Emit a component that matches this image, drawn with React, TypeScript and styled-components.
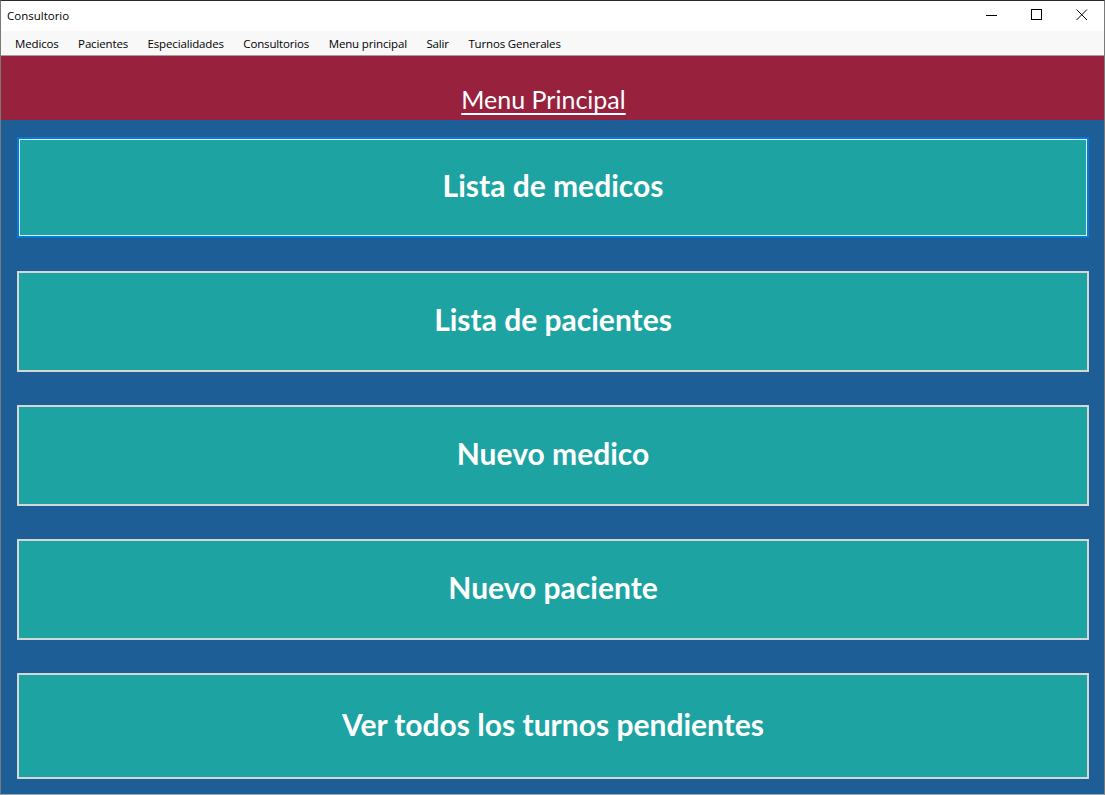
import React from 'react';
import styled, { createGlobalStyle } from 'styled-components';

const GlobalStyle = createGlobalStyle`
  html, body {
    margin: 0;
    padding: 0;
    background: #ffffff;
  }
  body {
    font-family: 'Open Sans', 'Noto Sans', sans-serif;
  }
`;

const Window = styled.div`
  width: 1105px;
  height: 795px;
  box-sizing: border-box;
  display: flex;
  flex-direction: column;
  border-top: 1px solid #2b2b2b;
  border-left: 1px solid #7a7a7a;
  border-right: 1px solid #7a7a7a;
  border-bottom: 1px solid #9aa9b8;
  overflow: hidden;
`;

const TitleBar = styled.div`
  height: 30px;
  flex: none;
  box-sizing: border-box;
  display: flex;
  align-items: center;
  justify-content: space-between;
  background: #ffffff;
  padding: 0 0 2px 6px;
`;

const Title = styled.span`
  font-family: 'Open Sans', sans-serif;
  font-size: 11.5px;
  color: #000000;
`;

const Controls = styled.div`
  display: flex;
  height: 100%;
`;

const ControlButton = styled.div`
  width: 45px;
  height: 100%;
  display: flex;
  align-items: center;
  justify-content: center;
`;

const MenuBar = styled.div`
  height: 24px;
  flex: none;
  display: flex;
  align-items: center;
  background: #f8f8f8;
  padding-left: 5px;
  border-bottom: 1px solid #a0a0a0;
`;

const MenuItem = styled.span`
  font-family: 'Open Sans', sans-serif;
  font-size: 11.5px;
  letter-spacing: -0.15px;
  color: #000000;
  padding: 0 10.5px 0 9px;
`;

const Header = styled.div`
  height: 64px;
  flex: none;
  background: #98213d;
  display: flex;
  align-items: flex-end;
  justify-content: center;
  padding: 0 18px 6px 0;
  box-sizing: border-box;
`;

const HeaderTitle = styled.span`
  font-family: Lato, sans-serif;
  font-size: 25px;
  color: #ffffff;
  text-decoration: underline;
  text-decoration-thickness: 2px;
  text-underline-offset: 4px;
`;

const Body = styled.div`
  flex: 1;
  background: #1e5e96;
  display: flex;
  flex-direction: column;
  gap: 33px;
  padding: 17px 15px 0 16px;
`;

const MenuButton = styled.button<{ $focused?: boolean; $tall?: boolean }>`
  height: ${({ $tall }) => ($tall ? '106px' : '101px')};
  width: 100%;
  flex: none;
  box-sizing: border-box;
  background: #1ea3a3;
  border: 2px solid ${({ $focused }) => ($focused ? '#0a78d7' : '#d6d6d6')};
  outline: ${({ $focused }) => ($focused ? '1px solid #d8f4ff' : 'none')};
  outline-offset: -3px;
  color: #ffffff;
  font-family: Lato, sans-serif;
  font-weight: 700;
  font-size: 30px;
  display: flex;
  align-items: center;
  justify-content: center;
  padding: 0 0 5px 0;
  cursor: pointer;
`;

const menuItems = [
  'Medicos',
  'Pacientes',
  'Especialidades',
  'Consultorios',
  'Menu principal',
  'Salir',
  'Turnos Generales',
];

const buttons = [
  'Lista de medicos',
  'Lista de pacientes',
  'Nuevo medico',
  'Nuevo paciente',
  'Ver todos los turnos pendientes',
];

export default function App() {
  return (
    <>
      <GlobalStyle />
      <Window>
        <TitleBar>
          <Title>Consultorio</Title>
          <Controls>
            <ControlButton>
              <svg width="12" height="12" viewBox="0 0 12 12">
                <line x1="0" y1="6.5" x2="11" y2="6.5" stroke="#000" strokeWidth="1" />
              </svg>
            </ControlButton>
            <ControlButton>
              <svg width="12" height="12" viewBox="0 0 12 12">
                <rect x="0.5" y="0.5" width="10" height="10" fill="none" stroke="#000" strokeWidth="1" />
              </svg>
            </ControlButton>
            <ControlButton>
              <svg width="12" height="12" viewBox="0 0 12 12">
                <path d="M0.5 0.5 L11 11 M11 0.5 L0.5 11" stroke="#000" strokeWidth="1" fill="none" />
              </svg>
            </ControlButton>
          </Controls>
        </TitleBar>
        <MenuBar>
          {menuItems.map((m) => (
            <MenuItem key={m}>{m}</MenuItem>
          ))}
        </MenuBar>
        <Header>
          <HeaderTitle>Menu Principal</HeaderTitle>
        </Header>
        <Body>
          {buttons.map((b, i) => (
            <MenuButton key={b} $focused={i === 0} $tall={i === buttons.length - 1}>
              {b}
            </MenuButton>
          ))}
        </Body>
      </Window>
    </>
  );
}
